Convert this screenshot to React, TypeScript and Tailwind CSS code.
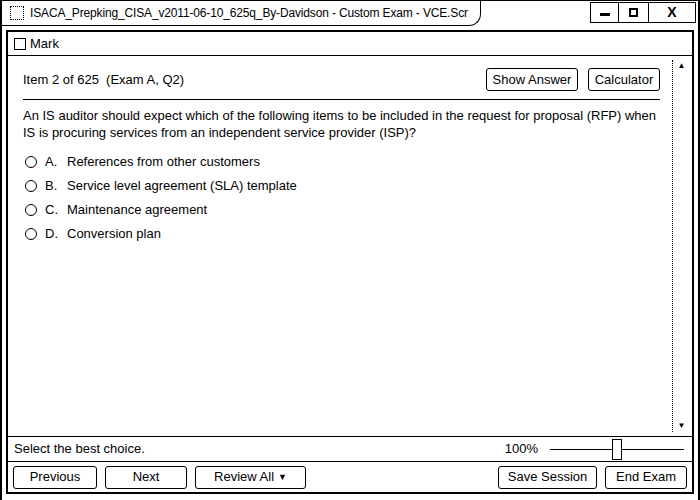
import { useState } from 'react';

const options = [
    { key: 'A', text: 'References from other customers' },
    { key: 'B', text: 'Service level agreement (SLA) template' },
    { key: 'C', text: 'Maintenance agreement' },
    { key: 'D', text: 'Conversion plan' },
];

const Btn = ({ label, className = '', arrow = false }: { label: string; className?: string; arrow?: boolean }) => (
    <button className={`h-[23px] border border-black rounded-[3px] bg-white text-[13px] text-black flex items-center justify-center gap-1 ${className}`}>
        <span>{label}</span>
        {arrow && <span className="text-[9px] leading-none">▼</span>}
    </button>
);

const App = () => {
    const [marked, setMarked] = useState(false);
    const [choice, setChoice] = useState('');

    return (
        <div className="w-[700px] h-[500px] bg-white text-black font-['Liberation_Sans',Arial,sans-serif] flex flex-col overflow-hidden border-l-2 border-r-2 border-black">
            {/* title bar */}
            <div className="h-[30px] flex items-start shrink-0 border-t border-black">
                <div className="flex items-center h-[25px] pl-[8px] pr-[12px] border-b border-r border-black rounded-br-[12px]">
                    <div className="w-[14px] h-[14px] border border-dotted border-black mr-[6px]" />
                    <span className="text-[12px] tracking-[-0.15px] whitespace-nowrap">
                        ISACA_Prepking_CISA_v2011-06-10_625q_By-Davidson - Custom Exam - VCE.Scr
                    </span>
                </div>
                <div className="flex-1" />
                <div className="flex h-[21px] mt-[1px] mr-[2px] border border-black">
                    <div className="w-[28px] flex items-center justify-center border-r border-black">
                        <div className="w-[10px] h-[3px] bg-black mt-[4px]" />
                    </div>
                    <div className="w-[30px] flex items-center justify-center border-r border-black">
                        <div className="w-[9px] h-[9px] border-2 border-black" />
                    </div>
                    <div className="w-[46px] flex items-center justify-center text-[14px] font-bold">X</div>
                </div>
            </div>

            {/* inner frame */}
            <div className="flex-1 mx-[4px] mb-[6px] border-2 border-black flex flex-col min-h-0">
                <div className="h-[24px] flex items-center pl-[6px] border-b border-black shrink-0">
                    <button
                        onClick={() => setMarked(!marked)}
                        className="w-[12px] h-[12px] border border-black bg-white mr-[4px] text-[10px] leading-none flex items-center justify-center"
                    >
                        {marked ? '✓' : ''}
                    </button>
                    <span className="text-[13px]">Mark</span>
                </div>

                <div className="flex-1 flex min-h-0 border-b border-black">
                    <div className="flex-1 pl-[15px] pr-[12px] pt-[12px]">
                        <div className="flex items-center justify-between pb-[8px] border-b border-black">
                            <span className="text-[13px] whitespace-pre">Item 2 of 625  (Exam A, Q2)</span>
                            <div className="flex gap-[10px]">
                                <Btn label="Show Answer" className="w-[92px]" />
                                <Btn label="Calculator" className="w-[72px]" />
                            </div>
                        </div>
                        <p className="text-[13px] leading-[17px] mt-[7px]">
                            An IS auditor should expect which of the following items to be included in the request for proposal (RFP) when IS is procuring services from an independent service provider (ISP)?
                        </p>
                        <div className="mt-[12px] flex flex-col gap-[7px]">
                            {options.map((o) => (
                                <label key={o.key} className="flex items-center h-[17px] text-[13px] cursor-pointer" onClick={() => setChoice(o.key)}>
                                    <span className="w-[12px] h-[12px] rounded-full border border-black ml-[2px] mr-[8px] flex items-center justify-center">
                                        {choice === o.key && <span className="w-[6px] h-[6px] rounded-full bg-black" />}
                                    </span>
                                    <span className="w-[22px]">{o.key}.</span>
                                    <span>{o.text}</span>
                                </label>
                            ))}
                        </div>
                    </div>
                    <div className="w-[18px] mr-[2px] my-[4px] border-l border-dotted border-black flex flex-col items-center justify-between py-[2px] text-[8px] leading-none">
                        <span>▲</span>
                        <span>▼</span>
                    </div>
                </div>

                <div className="h-[25px] flex items-center pl-[6px] pr-[8px] border-b border-black shrink-0">
                    <span className="text-[13px] flex-1">Select the best choice.</span>
                    <span className="text-[13px] mr-[12px]">100%</span>
                    <div className="relative w-[134px] h-[21px] flex items-center">
                        <div className="w-full h-px bg-black" />
                        <div className="absolute left-[62px] top-0 w-[10px] h-[21px] border border-black bg-white" />
                    </div>
                </div>

                <div className="flex-1 max-h-[30px] flex items-center px-[5px] gap-[8px] shrink-0">
                    <Btn label="Previous" className="w-[84px]" />
                    <Btn label="Next" className="w-[82px]" />
                    <Btn label="Review All" className="w-[111px]" arrow />
                    <div className="flex-1" />
                    <Btn label="Save Session" className="w-[99px]" />
                    <Btn label="End Exam" className="w-[82px]" />
                </div>
            </div>
        </div>
    );
};

export default App;
